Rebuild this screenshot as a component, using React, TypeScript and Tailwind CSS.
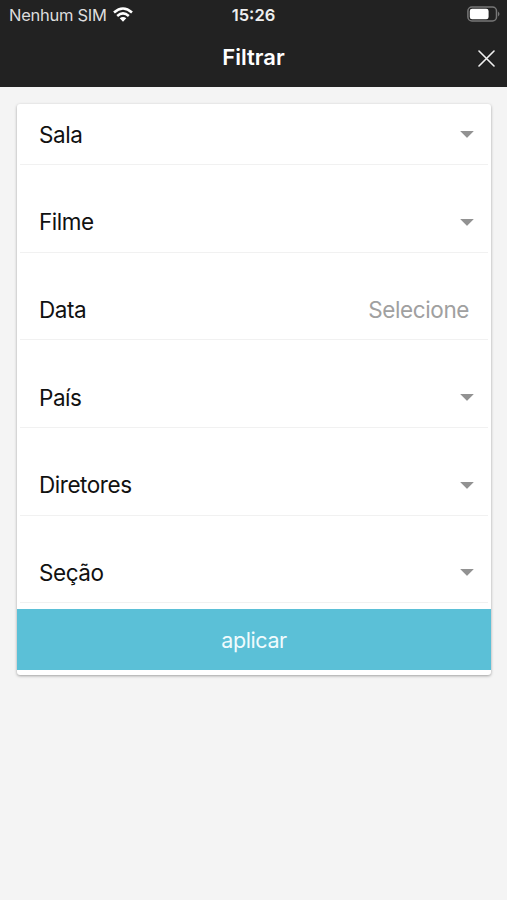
import React from 'react';

interface FilterRowProps {
  label: string;
  placeholder?: string;
}

const FilterRow: React.FC<FilterRowProps> = ({ label, placeholder }) => {
  return (
    <div className="mx-[3px] flex h-[61px] items-center justify-between border-b border-[#f1f1f1] pl-[19px] pr-[14px] pt-[1px]">
      <span className="text-[22.5px] tracking-[-0.45px] text-[#111111]">{label}</span>
      {placeholder ? (
        <span className="pr-[5px] text-[22.5px] tracking-[-0.4px] text-[#a0a0a0]">{placeholder}</span>
      ) : (
        <svg className="h-[7px] w-[14px]" viewBox="0 0 14 7" fill="#929292">
          <path d="M.8 0h12.4q.6 0 .2.5L7.4 6.6q-.4.4-.8 0L.6.5Q.2 0 .8 0Z" />
        </svg>
      )}
    </div>
  );
};

const StatusBar: React.FC = () => {
  return (
    <div className="grid h-[30px] grid-cols-3 items-center text-[#dddddd]">
      <div className="flex items-center gap-[6px] pl-[9px]">
        <span className="whitespace-nowrap text-[16.5px] tracking-[-0.27px]">Nenhum SIM</span>
        <svg className="mb-[2px] h-[15px] w-[20px] shrink-0" viewBox="0 0 20 15" fill="none" stroke="white" strokeWidth="2.6">
          <path d="M1 5.4Q10-2.4 19 5.4" />
          <path d="M4.2 8.9q5.8-4.9 11.6 0" />
          <path d="M6.7 11.3 10 14.8l3.3-3.5q-3.3-2.6-6.6 0Z" fill="white" stroke="none" />
        </svg>
      </div>
      <span className="text-center text-[16.5px] font-semibold text-[#eeeeee]">15:26</span>
      <div className="flex justify-end pb-[2px] pr-[7px]">
        <svg className="h-[16px] w-[33px]" viewBox="0 0 33 16" fill="none">
          <rect x=".9" y="1" width="28.6" height="14" rx="4" stroke="#777777" strokeWidth="1.5" />
          <rect x="2.8" y="2.8" width="18.8" height="10.4" rx="2.3" fill="white" />
          <path d="M31 5.5q3 2.5 0 5Z" fill="#777777" />
        </svg>
      </div>
    </div>
  );
};

const App: React.FC = () => {
  return (
    <div className="min-h-screen bg-[#f4f4f4] font-['Inter','Liberation_Sans',sans-serif]">
      <header className="h-[87px] bg-[#222222]">
        <StatusBar />
        <div className="grid h-[54px] grid-cols-[1fr_auto_1fr] items-center">
          <h1 className="col-start-2 text-[22px] font-semibold text-white">Filtrar</h1>
          <button className="mr-[12px] mt-[3px] justify-self-end" aria-label="Fechar">
            <svg className="h-[17px] w-[17px]" viewBox="0 0 17 17" stroke="#f0f0f0" strokeWidth="1.6" strokeLinecap="round">
              <path d="m1 1 15 15M16 1 1 16" />
            </svg>
          </button>
        </div>
      </header>
      <main className="pl-[17px] pr-[16px] pt-[17px]">
        <form className="rounded-[3px] bg-white pb-[5px] shadow-[0_1px_3px_rgba(0,0,0,0.35)]">
          <div className="flex flex-col gap-[26.7px]">
            <FilterRow label="Sala" />
            <FilterRow label="Filme" />
            <FilterRow label="Data" placeholder="Selecione" />
            <FilterRow label="País" />
            <FilterRow label="Diretores" />
            <FilterRow label="Seção" />
          </div>
          <button type="button" className="mt-[6px] h-[61px] w-full bg-[#5bc0d7] text-[21.5px] tracking-[-0.4px] text-[#f0fbfd]">
            aplicar
          </button>
        </form>
      </main>
    </div>
  );
};

export default App;
